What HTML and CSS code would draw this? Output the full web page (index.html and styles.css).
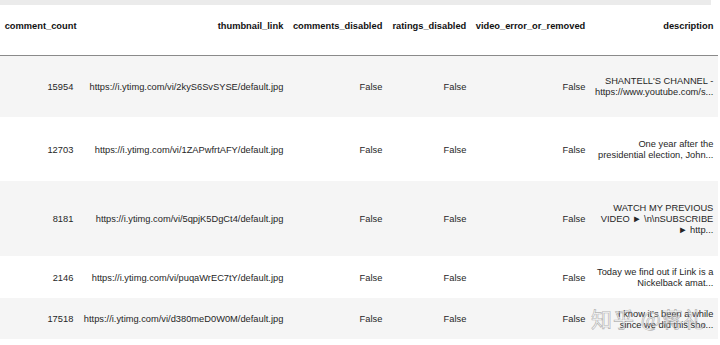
FILE: index.html
```html
<!DOCTYPE html>
<html lang="en">
<head>
  <meta charset="UTF-8" />
  <title>DataFrame preview</title>
  <link rel="stylesheet" href="styles.css">
</head>
<body>
  <div class="topband"></div>
  <table class="dataframe">
    <colgroup>
      <col class="c-count" />
      <col class="c-thumb" />
      <col class="c-comm" />
      <col class="c-rate" />
      <col class="c-err" />
      <col class="c-desc" />
    </colgroup>
    <thead>
      <tr>
        <th>comment_count</th>
        <th>thumbnail_link</th>
        <th>comments_disabled</th>
        <th>ratings_disabled</th>
        <th>video_error_or_removed</th>
        <th>description</th>
      </tr>
    </thead>
    <tbody>
      <tr class="r1">
        <td>15954</td>
        <td>https://i.ytimg.com/vi/2kyS6SvSYSE/default.jpg</td>
        <td>False</td>
        <td>False</td>
        <td>False</td>
        <td>SHANTELL'S CHANNEL - https://www.youtube.com/s...</td>
      </tr>
      <tr class="r2">
        <td>12703</td>
        <td>https://i.ytimg.com/vi/1ZAPwfrtAFY/default.jpg</td>
        <td>False</td>
        <td>False</td>
        <td>False</td>
        <td>One year after the presidential election, John...</td>
      </tr>
      <tr class="r3">
        <td>8181</td>
        <td>https://i.ytimg.com/vi/5qpjK5DgCt4/default.jpg</td>
        <td>False</td>
        <td>False</td>
        <td>False</td>
        <td>WATCH MY PREVIOUS VIDEO ► \n\nSUBSCRIBE ► http...</td>
      </tr>
      <tr class="r4">
        <td>2146</td>
        <td>https://i.ytimg.com/vi/puqaWrEC7tY/default.jpg</td>
        <td>False</td>
        <td>False</td>
        <td>False</td>
        <td>Today we find out if Link is a Nickelback amat...</td>
      </tr>
      <tr class="r5">
        <td>17518</td>
        <td>https://i.ytimg.com/vi/d380meD0W0M/default.jpg</td>
        <td>False</td>
        <td>False</td>
        <td>False</td>
        <td>I know it's been a while since we did this sho...</td>
      </tr>
    </tbody>
  </table>

  <!-- watermark over the last cell -->
  <div class="watermark">知乎 @蒋礼</div>
</body>
</html>
```

FILE: styles.css
```css
* {
  margin: 0;
  padding: 0;
  box-sizing: border-box;
}
body {
  background: #fff;
  color: #262626;
  font-family: "Liberation Sans", Arial, sans-serif;
  font-size: 9.3px;
  line-height: 11px;
  position: relative;
  width: 720px;
  height: 345px;
  overflow: hidden;
}
.topband {
  height: 5px;
  width: 711px;
  background: #ebebeb;
}
.dataframe {
  border-collapse: collapse;
  border-spacing: 0;
  table-layout: fixed;
  width: 718px;
}
.c-count { width: 78px; }
.c-thumb { width: 210px; }
.c-comm { width: 99px; }
.c-rate { width: 84px; }
.c-err { width: 119px; }
.c-desc { width: 128px; }

.dataframe th {
  height: 50px;
  padding: 16px 4.7px 0;
  text-align: right;
  vertical-align: top;
  font-weight: bold;
  color: #111;
  white-space: nowrap;
  border-bottom: 1px solid #8a8a8a;
}
.dataframe td {
  padding: 2px 4.7px 0;
  text-align: right;
  vertical-align: middle;
  white-space: nowrap;
}
.dataframe td:last-child {
  white-space: normal;
}
.dataframe tbody tr:nth-child(odd) {
  background: #f5f5f5;
}
.r1 { height: 62px; }
.r2 { height: 64px; }
.r3 { height: 75px; }
.r4 { height: 42px; }
.r5 { height: 41px; }

.watermark {
  position: absolute;
  left: 591px;
  top: 304px;
  font-family: "Noto Sans CJK SC", sans-serif;
  font-size: 21px;
  line-height: 28px;
  letter-spacing: 1px;
  color: rgba(255, 255, 255, 0.5);
  -webkit-text-stroke: 0.7px rgba(110, 110, 110, 0.5);
  white-space: nowrap;
}
```
